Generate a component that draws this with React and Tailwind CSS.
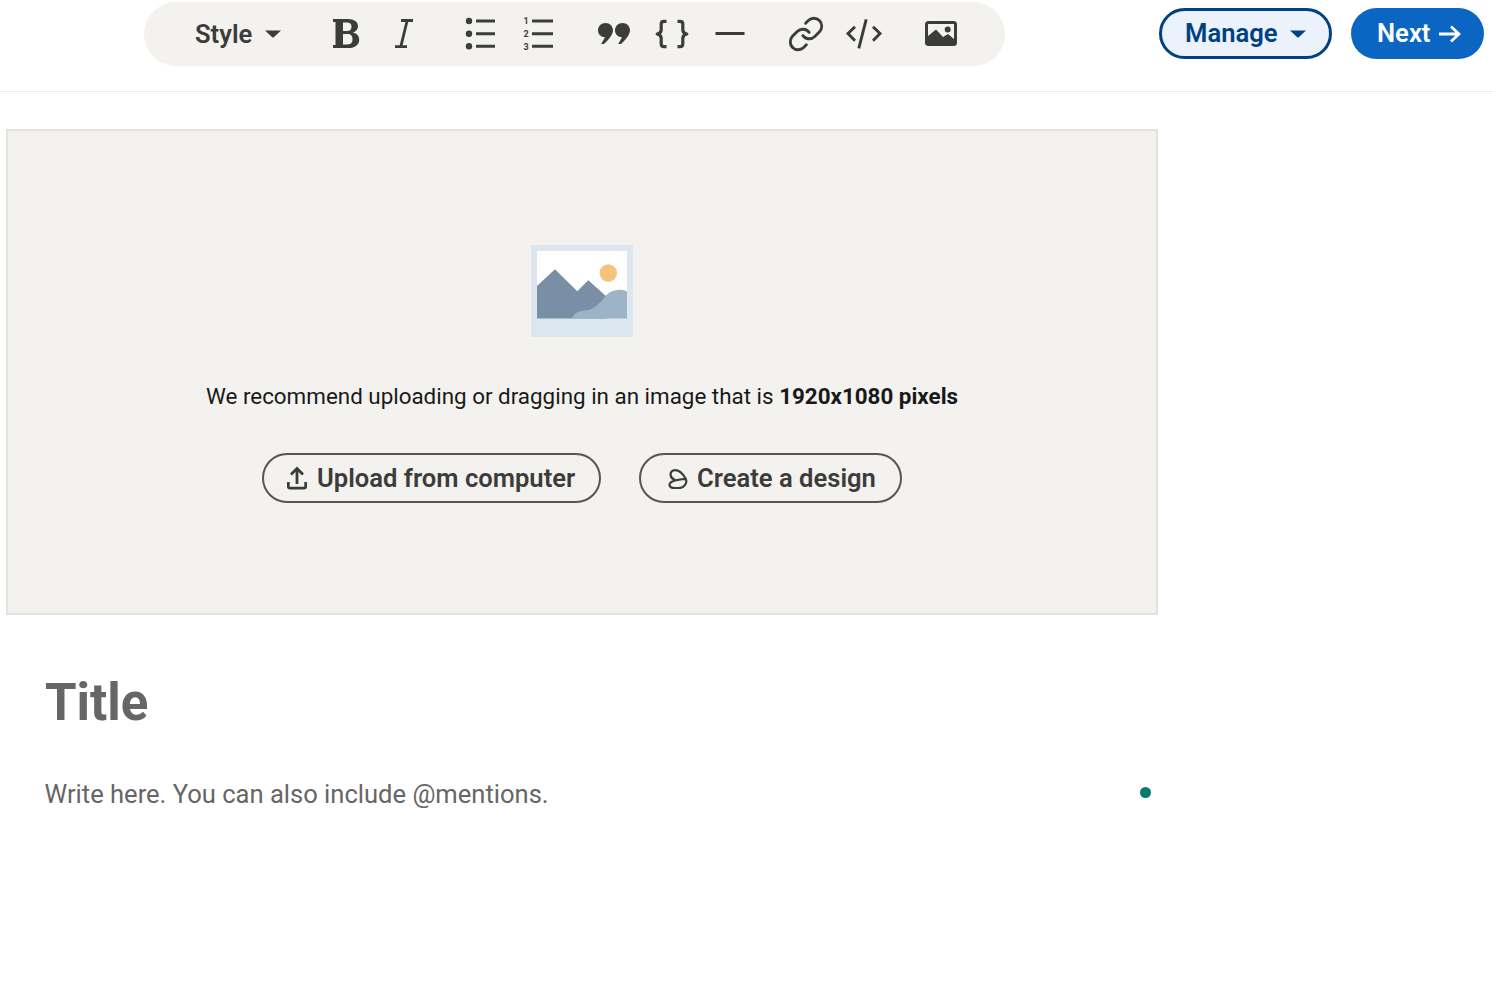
const Caret = ({ className }) => (
  <svg viewBox="0 0 16 8" className={className} fill="currentColor"><path d="M0 .5h16L8.8 7.2a1.2 1.2 0 0 1-1.600 0z" /></svg>
);

const Icon = ({ children, className = "w-8 h-8" }) => (
  <span className="w-[58px] flex items-center justify-center text-[#3c3c3b]">
    <svg viewBox="0 0 32 32" className={`${className} overflow-visible`} fill="none" stroke="currentColor" strokeLinecap="butt">
      {children}
    </svg>
  </span>
);

export default function App() {
  return (
    <div className="min-h-[1006px] bg-white font-['Roboto',sans-serif]">
      <header className="flex items-start h-[92px] border-b border-[#ebebeb] pl-[144px] pr-[8px] pt-[2px]">
        <div className="flex items-center h-[64px] w-[861px] rounded-full bg-[#f3f2ef] pl-[51px] gap-[18px]">
          <button className="flex items-center w-[104px] text-[25.600px] font-semibold text-[#3c3c3b]">
            Style
            <Caret className="w-[16px] h-[8px] ml-[13px] mt-[1px]" />
          </button>
          <div className="flex items-center">
            <Icon>
              <path
                fill="currentColor"
                stroke="none"
                fillRule="evenodd"
                d="M3 1H18c6.500 0 10 3 10 7.300 0 3-1.800 5.200-5 6.200 4 .9 6.200 3.500 6.200 7.200C29.200 26.800 25 30 18.500 30H3v-3h2.500V4H3ZM13 4.500v8.500h4c3 0 4.500-1.600 4.500-4.300S20 4.500 17 4.500ZM13 16v10.500h4.500c3.500 0 5-1.900 5-5.200S21 16 17.500 16Z"
              />
            </Icon>
            <Icon>
              <path strokeWidth="2.800" d="M13 2.500H25M7 28.700H19M19.200 2.500 12.800 28.700" />
            </Icon>
          </div>
          <div className="flex items-center">
            <Icon>
              <g fill="currentColor" stroke="none">
                <circle cx="5" cy="3" r="3.200" />
                <circle cx="5" cy="15.800" r="3.200" />
                <circle cx="5" cy="28.300" r="3.200" />
              </g>
              <path strokeWidth="3" d="M12 3H31M12 15.800H31M12 28.300H31" />
            </Icon>
            <Icon>
              <g fill="currentColor" stroke="none" fontFamily="Roboto" fontWeight="700" fontSize="9" textAnchor="middle">
                <text x="4" y="6.300">1</text>
                <text x="4" y="19">2</text>
                <text x="4" y="31.500">3</text>
              </g>
              <path strokeWidth="3" d="M10 3H31M10 15.800H31M10 28.300H31" />
            </Icon>
          </div>
          <div className="flex items-center">
            <Icon>
              <path
                fill="currentColor"
                stroke="none"
                d="M7.500 5C3.300 5 0 8.200 0 12.200c0 4 3 7 7 7l-3.800 6.800h2.800C10 22 15 17 15 12.200 15 8.200 11.700 5 7.500 5ZM24.500 5C20.300 5 17 8.200 17 12.200c0 4 3 7 7 7l-3.800 6.800H23c4-4 9-9 9-13.800C32 8.200 28.700 5 24.500 5Z"
              />
            </Icon>
            <Icon>
              <path
                strokeWidth="3.200"
                strokeLinejoin="round"
                d="M10.500 3.400H8C6 3.400 5.200 4.400 5.200 6v5.700c0 2.300-1.500 3.800-4 4.300 2.500.5 4 2 4 4.300V26c0 1.600.8 2.600 2.800 2.600h2.500M21.500 3.400H24c2 0 2.800 1 2.800 2.600v5.700c0 2.300 1.500 3.800 4 4.300-2.500.5-4 2-4 4.300V26c0 1.600-.8 2.600-2.800 2.600h-2.500"
              />
            </Icon>
            <Icon>
              <path strokeWidth="3" d="M1.500 15.500H30.500" />
            </Icon>
          </div>
          <div className="flex items-center">
            <Icon className="w-[38px] h-[38px]">
              <g transform="scale(1.333)" strokeWidth="1.800" strokeLinecap="round" strokeLinejoin="round">
                <path d="M10 13a5 5 0 0 0 7.540.54l3-3a5 5 0 0 0-7.070-7.070l-1.720 1.710" />
                <path d="M14 11a5 5 0 0 0-7.540-.54l-3 3a5 5 0 0 0 7.070 7.070l1.710-1.710" />
              </g>
            </Icon>
            <Icon>
              <path strokeWidth="2.900" d="M7 8.700 0 15.500 7 22.700M18.200 1.300 10.800 30.300M25 8.700 32 15.500 25 22.700" />
            </Icon>
          </div>
          <div className="flex items-center ml-[1px]">
            <Icon>
              <rect x="0" y="3" width="32" height="25" rx="3.500" fill="currentColor" stroke="none" />
              <path fill="#f3f2ef" stroke="none" d="M3 6H29V21L23 16 18 19 11 11.500 3 18Z" />
              <circle cx="22.700" cy="11.500" r="3" fill="currentColor" stroke="none" />
            </Icon>
          </div>
        </div>
        <div className="ml-auto flex items-center gap-[19px] mt-[6px] text-[25.600px] font-semibold">
          <button className="flex items-center h-[51px] w-[173px] pl-[23px] rounded-full border-[3px] border-[#004182] bg-[#ebf2fc] text-[#004182]">
            Manage
            <Caret className="w-[16px] h-[8px] ml-[12px] mt-[1px]" />
          </button>
          <button className="flex items-center h-[51px] w-[133px] pl-[26px] rounded-full bg-[#0a66c2] text-white">
            Next
            <svg viewBox="0 0 22 18" className="w-[22px] h-[18px] ml-[9px]" fill="none" stroke="currentColor" strokeWidth="2.800">
              <path d="M0 9H20M12 1.500 20 9 12 16.500" />
            </svg>
          </button>
        </div>
      </header>

      <main className="w-[1152px] ml-[6px] mt-[37px]">
        <section className="flex flex-col items-center h-[486px] border-2 border-[#e3e2dc] bg-[#f3f2ef] pt-[114px]">
          <svg viewBox="0 0 102 92" className="w-[102px] h-[92px]">
            <rect width="102" height="92" fill="#dce6f1" />
            <rect x="6" y="6" width="90" height="67" fill="#ffffff" />
            <path d="M6 41 24 24.300 46.300 46.300 57.300 35.300 76 52V73.500H6Z" fill="#788fa6" />
            <circle cx="77.300" cy="28" r="8.700" fill="#f5c37b" />
            <path d="M40.500 73.500C44 67 50 65.500 55.700 65.300 63 64.800 69 58 75 50.500 80 45 90 43 96 46.500V73.500Z" fill="#9db3c8" />
          </svg>
          <p className="mt-[45px] text-[22.400px] leading-[28px] text-[#191919]">
            We recommend uploading or dragging in an image that is <b className="font-bold">1920x1080 pixels</b>
          </p>
          <div className="flex gap-[38px] mt-[43px] text-[25.600px] font-semibold text-[#3c3c3b]">
            <button className="flex items-center h-[50px] w-[339px] pl-[23px] rounded-full border-2 border-[#555553]">
              <svg viewBox="0 0 20 24" className="w-[20px] h-[24px] mr-[10px]" fill="none" stroke="currentColor" strokeWidth="2.800">
                <path d="M10 18V3M4 8.500 10 2.500 16 8.500M1.300 16V20.500C1.300 21.500 2 22.200 3 22.200H17C18 22.200 18.700 21.500 18.700 20.500V16" />
              </svg>
              Upload from computer
            </button>
            <button className="flex items-center h-[50px] w-[263px] pl-[27px] rounded-full border-2 border-[#555553]">
              <svg viewBox="0 0 20 20" className="w-[20px] h-[20px] mr-[9px] mt-[1px]" fill="none" stroke="currentColor" strokeWidth="2.200">
                <path d="M2.700 6.500C2 3 4.500 1.200 7 1.200 11 1.200 15 5 17.800 9.800 19.500 14 16.500 19 11 19 6 19 1.800 19.500 1.500 16 1.300 12 8 10.500 17.800 9.800M2.700 6.500C3 8.500 4.500 10 7 11" />
              </svg>
              Create a design
            </button>
          </div>
        </section>
        <div className="pl-[39px] pt-[54px]">
          <h1 className="text-[51px] leading-[68px] font-bold text-[#666666]">Title</h1>
          <div className="flex items-center justify-between pr-[7px] mt-[40px]">
            <p className="text-[25.550px] leading-[34px] text-[#666666] -ml-[0.500px]">Write here. You can also include @mentions.</p>
            <span className="w-[11px] h-[11px] rounded-full bg-[#057b6e] -mt-[3px]" />
          </div>
        </div>
      </main>
    </div>
  );
}
